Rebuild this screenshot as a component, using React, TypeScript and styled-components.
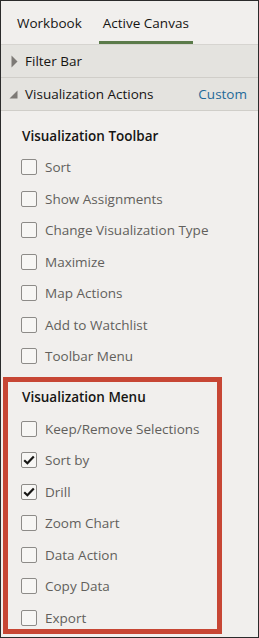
import React from "react";
import styled, { createGlobalStyle } from "styled-components";

const Global = createGlobalStyle`
  html, body { margin: 0; padding: 0; background: #f1efed; }
  * { box-sizing: border-box; }
`;

const Frame = styled.div`
  position: relative;
  width: 259px;
  height: 638px;
  border: 1px solid #2b2b2b;
  background: #f1efed;
  font-family: "Open Sans", "Liberation Sans", sans-serif;
  overflow: hidden;
  display: flex;
  flex-direction: column;
`;

const TabBar = styled.div`
  height: 44px;
  display: flex;
  align-items: stretch;
  gap: 13px;
  padding-left: 12px;
  border-bottom: 1px solid #d6d4d0;
`;

const Tab = styled.div<{ $active?: boolean }>`
  display: flex;
  align-items: center;
  padding: 0 4px;
  font-size: 13.5px;
  color: #161513;
  border-bottom: 3px solid ${(p) => (p.$active ? "#5b7b4a" : "transparent")};
  padding-top: 3px;
`;

const SectionHeader = styled.div`
  height: 33px;
  display: flex;
  align-items: center;
  padding: 0 11px 0 8px;
  background: #e4e3df;
  border-bottom: 1px solid #d0cec9;
  font-size: 13.5px;
  color: #161513;
`;

const Caret = styled.span<{ $indent: number }>`
  width: 16px;
  display: flex;
  align-items: center;
  justify-content: flex-start;
  padding-left: ${(p) => p.$indent}px;
`;

const HeaderTitle = styled.span`
  flex: 1;
`;

const HeaderLink = styled.span`
  color: #1f6a99;
  font-size: 13.5px;
`;

const Content = styled.div`
  display: flex;
  flex-direction: column;
  gap: 9.5px;
  padding: 9px 0 0 20px;
`;

const Group = styled.div`
  display: flex;
  flex-direction: column;
`;

const GroupTitle = styled.div`
  height: 31.5px;
  display: flex;
  align-items: center;
  font-size: 13.5px;
  font-weight: 600;
  color: #161513;
  padding-left: 1px;
`;

const Row = styled.label`
  height: 31.5px;
  display: flex;
  align-items: center;
  gap: 8px;
  font-size: 13.5px;
  color: #625f5c;
`;

const Box = styled.span`
  width: 16px;
  height: 16px;
  border: 1px solid #8d8b88;
  border-radius: 2px;
  background: #f7f6f4;
  display: flex;
  align-items: center;
  justify-content: center;
  flex: none;
`;

const Highlight = styled.div`
  position: absolute;
  left: 2px;
  top: 376px;
  width: 219px;
  height: 257px;
  border: 5px solid #c74634;
  pointer-events: none;
`;

const Check = () => (
  <svg width="12" height="10" viewBox="0 0 12 10">
    <path d="M1.2 5.2 L4.4 8.2 L10.8 1.4" fill="none" stroke="#161513" strokeWidth="2.2" />
  </svg>
);

const Checkbox = ({ label, checked }: { label: string; checked?: boolean }) => (
  <Row>
    <Box>{checked && <Check />}</Box>
    <span>{label}</span>
  </Row>
);

const toolbar = [
  "Sort",
  "Show Assignments",
  "Change Visualization Type",
  "Maximize",
  "Map Actions",
  "Add to Watchlist",
  "Toolbar Menu",
];

const menu: [string, boolean][] = [
  ["Keep/Remove Selections", false],
  ["Sort by", true],
  ["Drill", true],
  ["Zoom Chart", false],
  ["Data Action", false],
  ["Copy Data", false],
  ["Export", false],
];

export default function App() {
  return (
    <>
      <Global />
      <Frame>
        <TabBar>
          <Tab>Workbook</Tab>
          <Tab $active>Active Canvas</Tab>
        </TabBar>
        <SectionHeader>
          <Caret $indent={2}>
            <svg width="7" height="13" viewBox="0 0 7 13">
              <path d="M0.5 0.5 L6.5 6.5 L0.5 12.5 Z" fill="#7d7a76" />
            </svg>
          </Caret>
          <HeaderTitle>Filter Bar</HeaderTitle>
        </SectionHeader>
        <SectionHeader>
          <Caret $indent={0}>
            <svg width="9" height="9" viewBox="0 0 9 9">
              <path d="M8.5 0.5 L8.5 8.5 L0.5 8.5 Z" fill="#7d7a76" />
            </svg>
          </Caret>
          <HeaderTitle>Visualization Actions</HeaderTitle>
          <HeaderLink>Custom</HeaderLink>
        </SectionHeader>
        <Content>
          <Group>
            <GroupTitle>Visualization Toolbar</GroupTitle>
            {toolbar.map((t) => (
              <Checkbox key={t} label={t} />
            ))}
          </Group>
          <Group>
            <GroupTitle>Visualization Menu</GroupTitle>
            {menu.map(([t, c]) => (
              <Checkbox key={t} label={t} checked={c} />
            ))}
          </Group>
        </Content>
        <Highlight />
      </Frame>
    </>
  );
}
